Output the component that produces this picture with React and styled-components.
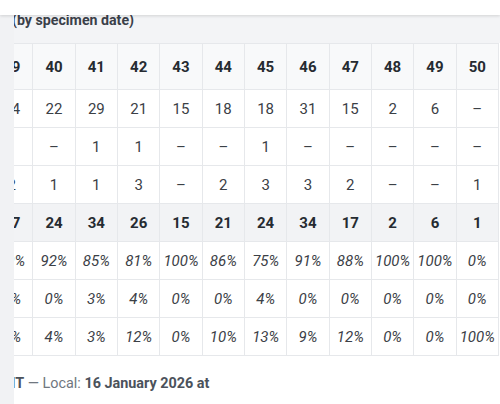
import React from 'react';
import styled, { createGlobalStyle } from 'styled-components';

const GlobalStyle = createGlobalStyle`
  html, body {
    margin: 0;
    padding: 0;
    background: #fff;
    font-family: Roboto, "Noto Sans", Arial, sans-serif;
  }
`;

const weeks = [39, 40, 41, 42, 43, 44, 45, 46, 47, 48, 49, 50];

const rows = [
  { kind: 'count', values: [24, 22, 29, 21, 15, 18, 18, 31, 15, 2, 6, null] },
  { kind: 'count', values: [1, null, 1, 1, null, null, 1, null, null, null, null, null] },
  { kind: 'count', values: [2, 1, 1, 3, null, 2, 3, 3, 2, null, null, 1] },
  { kind: 'total', values: [27, 24, 34, 26, 15, 21, 24, 34, 17, 2, 6, 1] },
  { kind: 'pct', values: [89, 92, 85, 81, 100, 86, 75, 91, 88, 100, 100, 0] },
  { kind: 'pct', values: [4, 0, 3, 4, 0, 0, 4, 0, 0, 0, 0, 0] },
  { kind: 'pct', values: [7, 4, 3, 12, 0, 10, 13, 9, 12, 0, 0, 100] },
];

const Page = styled.div`
  position: relative;
  display: grid;
  grid-template-columns: 14px 1fr;
  height: 404px;
  overflow: hidden;
`;

const TopBar = styled.header`
  position: absolute;
  top: 0;
  left: 0;
  right: 0;
  height: 15px;
  background: #fff;
  box-shadow: 0 1px 3px rgba(0, 0, 0, 0.14);
  z-index: 2;
`;

const SideStrip = styled.aside`
  background: #f1f2f4;
`;

const Main = styled.main`
  min-width: 0;
  overflow: hidden;
`;

/* content is scrolled sideways, so the week 39 column sits half under the strip */
const Scrolled = styled.div`
  margin-left: -24px;
  width: 560px;
`;

const Caption = styled.div`
  padding: 10px 0 13px 22px;
  line-height: 20px;
  font-size: 14.2px;
  font-weight: 700;
  color: #3a4049;
  background: #f3f4f6;
  white-space: nowrap;
`;

const Table = styled.table`
  border-collapse: collapse;
  table-layout: fixed;
  width: 508px;
`;

const Col = styled.col`
  width: 42.33px;
`;

const HeadCell = styled.th`
  height: 45px;
  padding: 0;
  border: 1px solid #e6e8eb;
  background: #f8f9fa;
  font-size: 15px;
  font-weight: 700;
  color: #262b31;
  text-align: center;
  vertical-align: middle;
`;

const Cell = styled.td`
  height: 37px;
  padding: 0;
  border: 1px solid #e6e8eb;
  text-align: center;
  vertical-align: middle;
  white-space: nowrap;
  font-size: 15px;
  font-style: ${p => (p.$kind === 'pct' ? 'italic' : 'normal')};
  font-weight: ${p => (p.$kind === 'total' ? 700 : 400)};
  color: ${p => (p.$kind === 'total' ? '#262b31' : '#3b4046')};
  background: ${p => (p.$kind === 'total' ? '#f2f3f5' : '#fff')};
`;

const Footer = styled.p`
  margin: 18px 0 0;
  padding-left: 3px;
  font-size: 14.4px;
  line-height: 20px;
  color: #707780;
  white-space: nowrap;

  b {
    font-weight: 700;
    color: #4b525b;
  }
`;

const format = (kind, v) => {
  if (v === null) return '–';
  return kind === 'pct' ? `${v}%` : v;
};

export default function App() {
  return (
    <>
      <GlobalStyle />
      <Page>
        <TopBar />
        <SideStrip />
        <Main>
          <Scrolled>
            <Caption>(by specimen date)</Caption>
            <Table>
              <colgroup>
                {weeks.map(w => <Col key={w} />)}
              </colgroup>
              <thead>
                <tr>
                  {weeks.map(w => <HeadCell key={w}>{w}</HeadCell>)}
                </tr>
              </thead>
              <tbody>
                {rows.map((row, i) => (
                  <tr key={i}>
                    {row.values.map((v, j) => (
                      <Cell key={j} $kind={row.kind}>{format(row.kind, v)}</Cell>
                    ))}
                  </tr>
                ))}
              </tbody>
            </Table>
            <Footer>
              <b>GMT</b> — Local: <b>16 January 2026 at</b>
            </Footer>
          </Scrolled>
        </Main>
      </Page>
    </>
  );
}
